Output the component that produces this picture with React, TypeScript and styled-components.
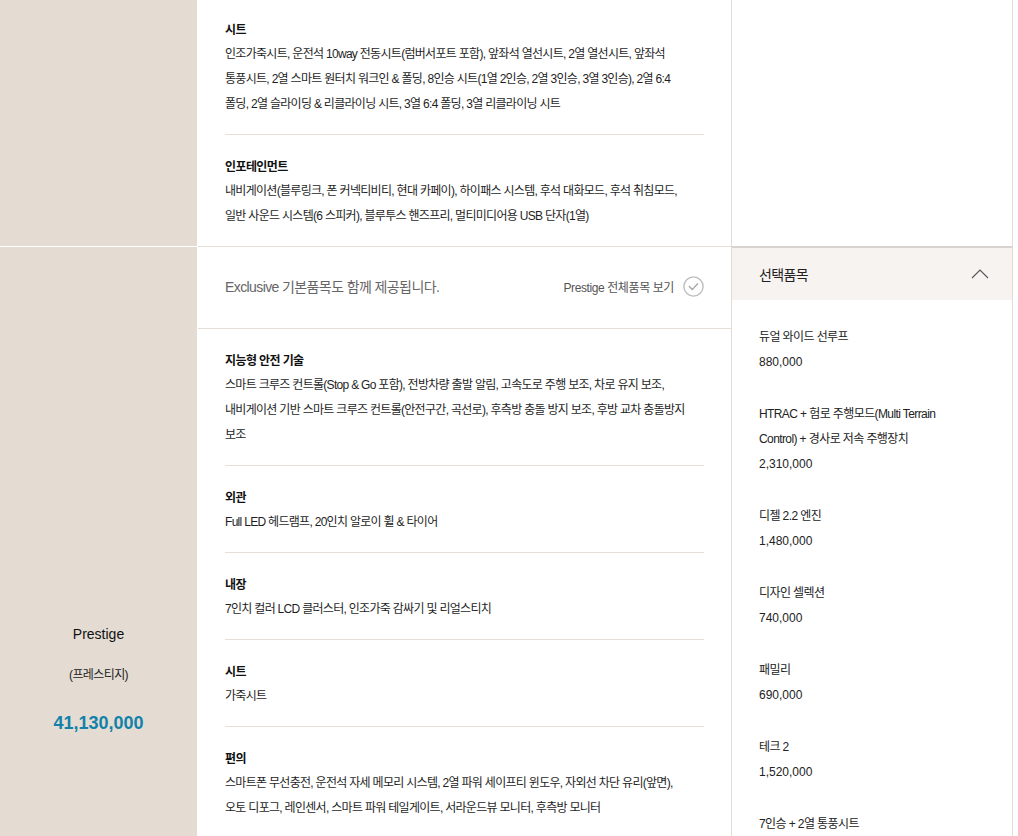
import React from "react";
import styled, { createGlobalStyle } from "styled-components";

const GlobalStyle = createGlobalStyle`
  html, body {
    margin: 0;
    padding: 0;
    background: #fff;
  }
  body {
    font-family: "Liberation Sans", "Noto Sans CJK KR", sans-serif;
    color: #222;
    word-break: keep-all;
  }
`;

const Table = styled.div`
  width: 1013px;
`;

const Row = styled.div`
  display: grid;
  grid-template-columns: 198px 533px 282px;
`;

const TrimCell = styled.div<{ $top?: number }>`
  background: #e4dcd3;
  border-right: 1px solid #fff;
  border-bottom: 1px solid #fff;
  padding-top: ${(p) => p.$top ?? 0}px;
  text-align: center;
`;

const TrimName = styled.div`
  font-size: 14px;
  line-height: 20px;
  color: #111;
`;

const TrimSub = styled.div`
  margin-top: 21px;
  font-size: 12px;
  line-height: 20px;
  letter-spacing: -0.6px;
  color: #222;
`;

const TrimPrice = styled.div`
  margin-top: 28px;
  font-size: 18px;
  line-height: 20px;
  font-weight: bold;
  color: #1281a9;
`;

const MainCell = styled.div`
  border-bottom: 1px solid #e6dfd7;
`;

const Notice = styled.div`
  display: flex;
  align-items: center;
  justify-content: space-between;
  box-sizing: border-box;
  height: 82px;
  padding: 0 27px 3px;
  border-bottom: 1px solid #e6dfd7;
`;

const NoticeText = styled.div`
  font-size: 14px;
  letter-spacing: -0.6px;
  color: #666;
`;

const FullLink = styled.a`
  display: flex;
  align-items: center;
  gap: 9px;
  font-size: 12px;
  letter-spacing: -0.4px;
  color: #555;
  text-decoration: none;
  cursor: pointer;
`;

const Groups = styled.div`
  padding: 0 27px;
`;

const Group = styled.div<{ $first?: boolean; $padTop?: number; $padBottom?: number }>`
  padding-top: ${(p) => p.$padTop ?? 19}px;
  padding-bottom: ${(p) => p.$padBottom ?? 17}px;
  border-top: ${(p) => (p.$first ? "none" : "1px solid #e6dfd7")};
`;

const GroupTitle = styled.div`
  padding-top: 1px;
  font-size: 12px;
  line-height: 24px;
  font-weight: bold;
  letter-spacing: -0.6px;
  color: #111;
`;

const GroupBody = styled.div`
  font-size: 12px;
  line-height: 25px;
  letter-spacing: -0.7px;
  color: #1e1e1e;
  max-width: 460px;
`;

const SideCell = styled.div`
  border-left: 1px solid #e3dcd4;
  border-right: 1px solid #e3dcd4;
`;

const SideCellTop = styled(SideCell)`
  border-bottom: 1px solid #d9d3cd;
`;

const SideHeader = styled.div`
  display: flex;
  align-items: center;
  justify-content: space-between;
  height: 52px;
  padding: 0 23px 0 27px;
  background: #f6f3f0;
  border-top: 1px solid #d9d3cd;
  font-size: 14px;
  letter-spacing: -0.6px;
  color: #222;
`;

const OptionList = styled.ul`
  list-style: none;
  margin: 0;
  padding: 25px 0 0 27px;
`;

const OptionItem = styled.li`
  max-width: 205px;
  margin-bottom: 27px;
  font-size: 12px;
  line-height: 25px;
  letter-spacing: -0.6px;
  color: #222;
`;

const OptionPrice = styled.div`
  letter-spacing: 0;
`;

const CheckCircle = () => (
  <svg width="21" height="21" viewBox="0 0 21 21" fill="none">
    <circle cx="10.5" cy="10.5" r="9.6" stroke="#bdbdbd" strokeWidth="1.4" />
    <polyline points="6.3,10.6 9.3,13.6 14.6,7.8" stroke="#a8a8a8" strokeWidth="1.4" strokeLinecap="round" strokeLinejoin="round" />
  </svg>
);

const ChevronUp = () => (
  <svg width="18" height="10" viewBox="0 0 18 10" fill="none">
    <polyline points="1,9 9,1 17,9" stroke="#555" strokeWidth="1.1" />
  </svg>
);

type Spec = { title: string; body: string };

const topSpecs: Spec[] = [
  {
    title: "시트",
    body: "인조가죽시트, 운전석 10way 전동시트(럼버서포트 포함), 앞좌석 열선시트, 2열 열선시트, 앞좌석 통풍시트, 2열 스마트 원터치 워크인 & 폴딩, 8인승 시트(1열 2인승, 2열 3인승, 3열 3인승), 2열 6:4 폴딩, 2열 슬라이딩 & 리클라이닝 시트, 3열 6:4 폴딩, 3열 리클라이닝 시트",
  },
  {
    title: "인포테인먼트",
    body: "내비게이션(블루링크, 폰 커넥티비티, 현대 카페이), 하이패스 시스템, 후석 대화모드, 후석 취침모드, 일반 사운드 시스템(6 스피커), 블루투스 핸즈프리, 멀티미디어용 USB 단자(1열)",
  },
];

const prestigeSpecs: Spec[] = [
  {
    title: "지능형 안전 기술",
    body: "스마트 크루즈 컨트롤(Stop & Go 포함), 전방차량 출발 알림, 고속도로 주행 보조, 차로 유지 보조, 내비게이션 기반 스마트 크루즈 컨트롤(안전구간, 곡선로), 후측방 충돌 방지 보조, 후방 교차 충돌방지 보조",
  },
  { title: "외관", body: "Full LED 헤드램프, 20인치 알로이 휠 & 타이어" },
  { title: "내장", body: "7인치 컬러 LCD 클러스터, 인조가죽 감싸기 및 리얼스티치" },
  { title: "시트", body: "가죽시트" },
  {
    title: "편의",
    body: "스마트폰 무선충전, 운전석 자세 메모리 시스템, 2열 파워 세이프티 윈도우, 자외선 차단 유리(앞면), 오토 디포그, 레인센서, 스마트 파워 테일게이트, 서라운드뷰 모니터, 후측방 모니터",
  },
];

const options = [
  { name: "듀얼 와이드 선루프", price: "880,000" },
  { name: "HTRAC + 험로 주행모드(Multi Terrain Control) + 경사로 저속 주행장치", price: "2,310,000" },
  { name: "디젤 2.2 엔진", price: "1,480,000" },
  { name: "디자인 셀렉션", price: "740,000" },
  { name: "패밀리", price: "690,000" },
  { name: "테크 2", price: "1,520,000" },
  { name: "7인승 + 2열 통풍시트", price: "990,000" },
];

export default function App() {
  return (
    <>
      <GlobalStyle />
      <Table>
        <Row>
          <TrimCell />
          <MainCell>
            <Groups>
              {topSpecs.map((s, i) => (
                <Group
                  key={s.title}
                  $first={i === 0}
                  $padTop={i === 0 ? 17 : 19}
                  $padBottom={17}
                >
                  <GroupTitle>{s.title}</GroupTitle>
                  <GroupBody>{s.body}</GroupBody>
                </Group>
              ))}
            </Groups>
          </MainCell>
          <SideCellTop />
        </Row>
        <Row>
          <TrimCell $top={377}>
            <TrimName>Prestige</TrimName>
            <TrimSub>(프레스티지)</TrimSub>
            <TrimPrice>41,130,000</TrimPrice>
          </TrimCell>
          <MainCell>
            <Notice>
              <NoticeText>Exclusive 기본품목도 함께 제공됩니다.</NoticeText>
              <FullLink>
                Prestige 전체품목 보기
                <CheckCircle />
              </FullLink>
            </Notice>
            <Groups>
              {prestigeSpecs.map((s, i) => (
                <Group key={s.title + i} $first={i === 0}>
                  <GroupTitle>{s.title}</GroupTitle>
                  <GroupBody>{s.body}</GroupBody>
                </Group>
              ))}
            </Groups>
          </MainCell>
          <SideCell>
            <SideHeader>
              선택품목
              <ChevronUp />
            </SideHeader>
            <OptionList>
              {options.map((o) => (
                <OptionItem key={o.name}>
                  {o.name}
                  <OptionPrice>{o.price}</OptionPrice>
                </OptionItem>
              ))}
            </OptionList>
          </SideCell>
        </Row>
      </Table>
    </>
  );
}
